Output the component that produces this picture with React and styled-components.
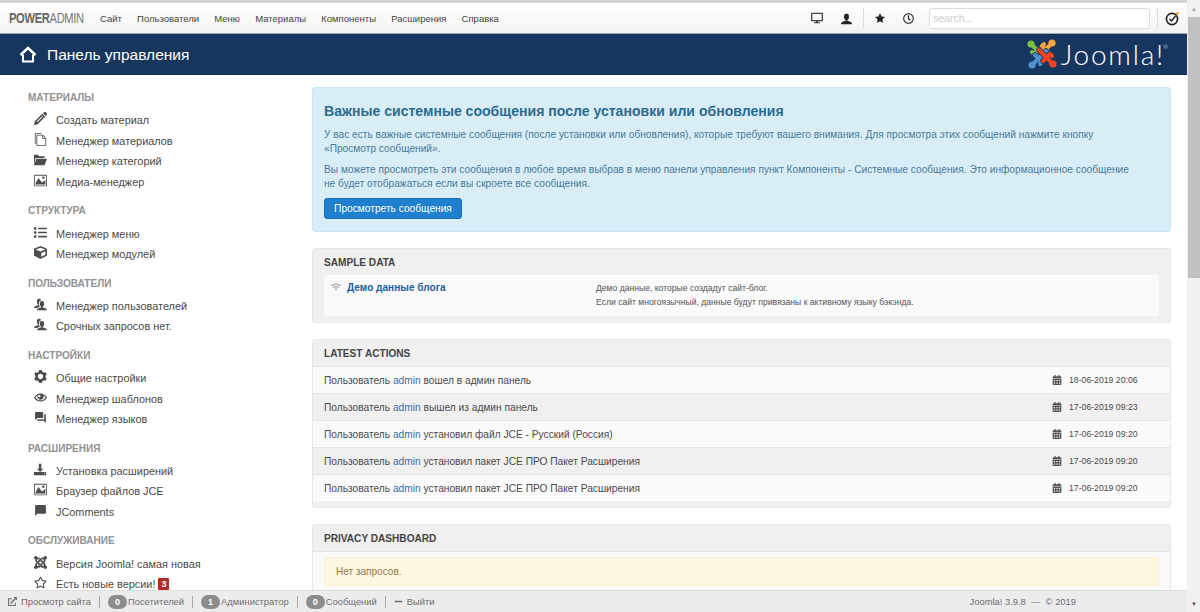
import React from "react";
import styled, { createGlobalStyle } from "styled-components";
import {
  FaCube,
  FaList,
  FaRegStar,
  FaDesktop,
  FaRegClock,
  FaWifi,
  FaCalendarAlt,
  FaExternalLinkAlt,
  FaMinus,
} from "react-icons/fa";
import {
  ImPencil,
  ImFilesEmpty,
  ImFolderOpen,
  ImImage,
  ImUsers,
  ImCog,
  ImEye,
  ImDownload3,
  ImJoomla,
  ImUser,
  ImStarFull,
} from "react-icons/im";
import { MdChatBubble, MdQuestionAnswer } from "react-icons/md";

const MENU = [
  { title: "МАТЕРИАЛЫ", items: [
    { icon: ImPencil, label: "Создать материал" },
    { icon: ImFilesEmpty, label: "Менеджер материалов" },
    { icon: ImFolderOpen, label: "Менеджер категорий" },
    { icon: ImImage, label: "Медиа-менеджер" },
  ] },
  { title: "СТРУКТУРА", items: [
    { icon: FaList, label: "Менеджер меню" },
    { icon: FaCube, label: "Менеджер модулей" },
  ] },
  { title: "ПОЛЬЗОВАТЕЛИ", items: [
    { icon: ImUsers, label: "Менеджер пользователей" },
    { icon: ImUsers, label: "Срочных запросов нет." },
  ] },
  { title: "НАСТРОЙКИ", items: [
    { icon: ImCog, label: "Общие настройки" },
    { icon: ImEye, label: "Менеджер шаблонов" },
    { icon: MdQuestionAnswer, label: "Менеджер языков" },
  ] },
  { title: "РАСШИРЕНИЯ", items: [
    { icon: ImDownload3, label: "Установка расширений" },
    { icon: ImImage, label: "Браузер файлов JCE" },
    { icon: MdChatBubble, label: "JComments" },
  ] },
  { title: "ОБСЛУЖИВАНИЕ", items: [
    { icon: ImJoomla, label: "Версия Joomla! самая новая" },
    { icon: FaRegStar, label: "Есть новые версии!", badge: 3 },
  ] },
];

const NAV = ["Сайт", "Пользователи", "Меню", "Материалы", "Компоненты", "Расширения", "Справка"];

const ACTIONS = [
  { post: " вошел в админ панель", date: "18-06-2019 20:06" },
  { post: " вышел из админ панель", date: "17-06-2019 09:23" },
  { post: " установил файл JCE - Русский (Россия)", date: "17-06-2019 09:20" },
  { post: " установил пакет JCE ПРО Пакет Расширения", date: "17-06-2019 09:20" },
  { post: " установил пакет JCE ПРО Пакет Расширения", date: "17-06-2019 09:20" },
];

const LOGO_ARMS = [
  { color: "#7ac143", angle: 0 },
  { color: "#f9a541", angle: 90 },
  { color: "#5091cd", angle: 270 },
  { color: "#f44321", angle: 180 },
];

const GlobalStyle = createGlobalStyle`
  html, body {
    margin: 0;
    height: 100%;
    overflow: hidden;
    background: #fff;
  }
  body {
    font-family: "Liberation Sans", Arial, sans-serif;
    font-size: 11px;
    color: #515151;
  }
  * { box-sizing: border-box; }
`;

const Page = styled.div`
  width: 1200px;
  height: 612px;
  display: flex;
  overflow: hidden;
`;

const Main = styled.div`
  width: 1187px;
  height: 612px;
  position: relative;
  overflow: hidden;
  border-top: 3px solid #d4d4d4;
`;

const Scrollbar = styled.div`
  width: 13px;
  height: 612px;
  background: #f1f1f1;
  display: flex;
  flex-direction: column;
  align-items: flex-end;
`;

const ScrollArrow = styled.div`
  width: 12px;
  height: 17px;
  display: flex;
  align-items: center;
  justify-content: center;
  color: ${({ $down }) => ($down ? "#505050" : "#a3a3a3")};
  font-size: 6px;
  margin-top: ${({ $down }) => ($down ? "auto" : "0")};
`;

const ScrollThumb = styled.div`
  width: 12px;
  height: 261px;
  background: #c1c1c1;
`;

const NavBar = styled.div`
  height: 31px;
  display: flex;
  align-items: center;
  padding-left: 9px;
  background: linear-gradient(#fff, #f3f3f3);
  border-bottom: 1px solid #9fa8b4;
`;

const Brand = styled.div`
  font-size: 13px;
  color: #777;
  width: 91px;
  flex-shrink: 0;
  letter-spacing: -0.4px;
  transform: scale(0.86, 1.1);
  transform-origin: left center;
  & b { color: #666; }
`;

const NavLink = styled.div`
  font-size: 9.5px;
  color: #444;
  margin-right: 15.2px;
`;

const NavTools = styled.div`
  margin-left: auto;
  display: flex;
  align-items: center;
  color: #222;
`;

const ToolIcon = styled.div`
  width: ${({ $w }) => $w || 28}px;
  display: flex;
  justify-content: center;
  font-size: ${({ $size }) => $size || 12}px;
  color: ${({ $color }) => $color || "#222"};
`;

const ToolDivider = styled.div`
  width: 1px;
  height: 20px;
  background: #ddd;
  margin: 0 ${({ $gap }) => $gap || 8}px;
`;

const Search = styled.input`
  width: 221px;
  height: 21px;
  border: 1px solid #ddd;
  border-radius: 3px;
  background: #fff;
  font: 10.5px "Liberation Sans", Arial, sans-serif;
  padding: 0 3px;
  margin-left: 7px;
  &::placeholder { color: #ccc; }
`;

const Header = styled.div`
  height: 41px;
  background: #17365f;
  border-bottom: 1px solid #0f2a50;
  display: flex;
  align-items: center;
  padding: 0 19px;
  color: #fff;
`;

const HeaderTitle = styled.div`
  font-size: 15.5px;
  margin: 2px 0 0 10px;
`;

const Logo = styled.div`
  margin-left: auto;
  display: flex;
  align-items: center;
  gap: 4px;
`;

const LogoWord = styled.span`
  font-family: Lato, "Open Sans", sans-serif;
  font-weight: 300;
  font-size: 28px;
  letter-spacing: 1.8px;
  color: #fff;
  & sup {
    font-size: 6px;
    letter-spacing: 0;
    vertical-align: 16px;
    line-height: 0;
    margin-left: -2px;
  }
`;

const Body = styled.div`
  display: flex;
  padding: 12px 16px 0 28px;
`;

const Sidebar = styled.div`
  width: 284px;
  flex-shrink: 0;
  padding-top: 1px;
`;

const SideGroup = styled.div`
  margin-bottom: 9.3px;
`;

const SideTitle = styled.div`
  font-size: 10.05px;
  font-weight: bold;
  color: #929292;
  height: 19px;
  line-height: 20px;
  margin-bottom: 3px;
`;

const SideItem = styled.div`
  height: 20.5px;
  display: flex;
  align-items: center;
  font-size: 10.9px;
  color: #4a4a4a;
  padding-left: 6px;
  & svg {
    width: 13px;
    height: 13px;
    margin: -3px 9px 0 0;
    color: #4d4d4d;
    flex-shrink: 0;
  }
`;

const Badge = styled.span`
  background: #b02b2b;
  color: #fff;
  font-size: 9px;
  font-weight: bold;
  padding: 1px 3px;
  margin-left: 3px;
  border-radius: 1px;
`;

const Content = styled.div`
  flex: 1;
  min-width: 0;
  display: flex;
  flex-direction: column;
  gap: 16px;
`;

const Alert = styled.div`
  height: 145px;
  background: #d9edf7;
  border: 1px solid #cde6f3;
  border-radius: 3px;
  padding: 14px 11px;
  color: #4a7a98;
  line-height: 14px;
  font-size: 10.16px;
`;

const AlertTitle = styled.div`
  font-size: 14.07px;
  font-weight: bold;
  color: #2a6b8f;
  line-height: 18px;
  margin-bottom: 8px;
`;

const AlertText = styled.p`
  margin: 0 0 7px;
`;

const Button = styled.button`
  display: block;
  height: 21px;
  width: 138px;
  padding: 0;
  background: #1f80d0;
  border: 1px solid #1a6fb5;
  border-radius: 3px;
  color: #fff;
  font: 10.2px "Liberation Sans", Arial, sans-serif;
`;

const Panel = styled.div`
  background: #f0f0f0;
  border: 1px solid #e8e8e8;
  border-radius: 3px;
  padding-bottom: ${({ $pad }) => $pad || 0}px;
`;

const PanelTitle = styled.div`
  height: 26px;
  line-height: 27px;
  padding-left: 11px;
  font-size: 10.1px;
  font-weight: bold;
  color: #444;
`;

const SampleBox = styled.div`
  margin: 0 11px;
  height: 41px;
  background: #fafafa;
  display: flex;
  padding: 6px 7px;
`;

const SampleName = styled.div`
  width: 265px;
  display: flex;
  gap: 6px;
  font-size: 10.1px;
  line-height: 14px;
  font-weight: bold;
  color: #22609c;
  & svg { color: #aaa; font-size: 10px; margin-top: 1px; }
`;

const SampleDesc = styled.div`
  font-size: 8.6px;
  line-height: 14px;
  color: #555;
`;

const ActionRow = styled.div`
  height: 27px;
  display: flex;
  align-items: center;
  padding: 0 11px;
  font-size: 10.2px;
  color: #4a4a4a;
  background: ${({ $odd }) => ($odd ? "#f0f0f0" : "#fafafa")};
  border-top: 1px solid #e6e6e6;
`;

const UserLink = styled.span`
  color: #3a6ea5;
`;

const ActionDate = styled.div`
  margin-left: auto;
  width: 107px;
  display: flex;
  align-items: center;
  gap: 7px;
  font-size: 8.7px;
  & svg { color: #555; font-size: 10px; flex-shrink: 0; }
`;

const PrivacyBody = styled.div`
  background: #fafafa;
  border-top: 1px solid #e6e6e6;
  padding: 5px 11px;
`;

const Warning = styled.div`
  height: 29px;
  line-height: 27px;
  background: #fdf6e1;
  border: 1px solid #faf0d2;
  border-radius: 3px;
  padding-left: 11px;
  color: #947a44;
  font-size: 10.05px;
`;

const StatusBar = styled.div`
  position: absolute;
  left: 0;
  right: 0;
  bottom: 0;
  height: 22px;
  background: #ececec;
  border-top: 1px solid #ddd;
  display: flex;
  align-items: center;
  padding: 0 0 0 8px;
  font-size: 9.4px;
  color: #6f6f6f;
`;

const StatusItem = styled.div`
  display: flex;
  align-items: center;
  gap: ${({ $gap }) => $gap || 1}px;
  & svg { font-size: 9px; }
`;

const StatusDivider = styled.div`
  width: 1px;
  height: 12px;
  background: #aaa;
  margin: 0 8px;
`;

const Count = styled.span`
  background: #8c8c8c;
  color: #fff;
  font-size: 9px;
  font-weight: bold;
  width: 19px;
  height: 14px;
  border-radius: 7px;
  text-align: center;
  line-height: 14px;
`;

const Copyright = styled.div`
  margin-left: auto;
  margin-right: 111px;
  white-space: pre;
`;

function JoomlaMark() {
  // one arm of the logo, rotated round the centre for the other three
  return (
    <svg width="30" height="30" viewBox="0 0 30 30" fill="none" strokeLinecap="round">
      {LOGO_ARMS.map(arm => (
        <g key={arm.color} transform={`rotate(${arm.angle} 15 15)`}>
          <path d="M5 6 L18 19 M7 15 L14 8" stroke="#17365f" strokeWidth="5.5" />
          <path d="M5 6 L18 19 M7 15 L14 8 M7 15 L5 13" stroke={arm.color} strokeWidth="4" />
          <circle cx="4" cy="5" r="3.6" fill={arm.color} />
        </g>
      ))}
    </svg>
  );
}

function HomeIcon() {
  return (
    <svg width="18" height="17" viewBox="0 0 18 17" fill="none" stroke="#fff">
      <path d="M1.5 9 L9 2 L16.5 9" strokeWidth="2.4" />
      <path d="M4 8.5 V15.5 H14 V8.5" strokeWidth="2" />
    </svg>
  );
}

function UpdateIcon() {
  return (
    <svg width="15" height="15" viewBox="0 0 15 15" fill="none">
      <circle cx="7" cy="8" r="5.6" stroke="#222" strokeWidth="1.6" />
      <path d="M4.5 8 L6.5 10 L10.5 5" stroke="#222" strokeWidth="1.5" />
      <circle cx="12.5" cy="2.5" r="1.4" fill="#f0a030" />
    </svg>
  );
}

export default function App() {
  return (
    <Page>
      <GlobalStyle />
      <Main>
        <NavBar>
          <Brand><b>POWER</b>ADMIN</Brand>
          {NAV.map(item => (
            <NavLink key={item}>{item}</NavLink>
          ))}
          <NavTools>
            <ToolIcon $color="#444"><FaDesktop /></ToolIcon>
            <ToolIcon $w={30} $size={13}><ImUser /></ToolIcon>
            <ToolDivider $gap={2} />
            <ToolIcon><ImStarFull size={10} /></ToolIcon>
            <ToolIcon><FaRegClock size={11} /></ToolIcon>
            <Search placeholder="search..." />
            <ToolDivider $gap={7} />
            <ToolIcon $w={15}><UpdateIcon /></ToolIcon>
            <ToolIcon $w={7} />
          </NavTools>
        </NavBar>
        <Header>
          <HomeIcon />
          <HeaderTitle>Панель управления</HeaderTitle>
          <Logo>
            <JoomlaMark />
            <LogoWord>Joomla!<sup>®</sup></LogoWord>
          </Logo>
        </Header>
        <Body>
          <Sidebar>
            {MENU.map(group => (
              <SideGroup key={group.title}>
                <SideTitle>{group.title}</SideTitle>
                {group.items.map(item => (
                  <SideItem key={item.label}>
                    <item.icon />
                    {item.label}
                    {item.badge && <Badge>{item.badge}</Badge>}
                  </SideItem>
                ))}
              </SideGroup>
            ))}
          </Sidebar>
          <Content>
            <Alert>
              <AlertTitle>Важные системные сообщения после установки или обновления</AlertTitle>
              <AlertText>
                У вас есть важные системные сообщения (после установки или обновления), которые требуют вашего внимания. Для просмотра этих сообщений нажмите кнопку<br />
                «Просмотр сообщений».
              </AlertText>
              <AlertText>
                Вы можете просмотреть эти сообщения в любое время выбрав в меню панели управления пункт Компоненты - Системные сообщения. Это информационное сообщение<br />
                не будет отображаться если вы скроете все сообщения.
              </AlertText>
              <Button>Просмотреть сообщения</Button>
            </Alert>
            <Panel $pad={6}>
              <PanelTitle>SAMPLE DATA</PanelTitle>
              <SampleBox>
                <SampleName><FaWifi />Демо данные блога</SampleName>
                <SampleDesc>
                  Демо данные, которые создадут сайт-блог.<br />
                  Если сайт многоязычный, данные будут привязаны к активному языку бэкэнда.
                </SampleDesc>
              </SampleBox>
            </Panel>
            <Panel $pad={6}>
              <PanelTitle>LATEST ACTIONS</PanelTitle>
              {ACTIONS.map((a, i) => (
                <ActionRow key={i} $odd={i % 2 === 1}>
                  <span>Пользователь <UserLink>admin</UserLink>{a.post}</span>
                  <ActionDate><FaCalendarAlt />{a.date}</ActionDate>
                </ActionRow>
              ))}
            </Panel>
            <Panel>
              <PanelTitle>PRIVACY DASHBOARD</PanelTitle>
              <PrivacyBody>
                <Warning>Нет запросов.</Warning>
              </PrivacyBody>
            </Panel>
          </Content>
        </Body>
        <StatusBar>
          <StatusItem $gap={4}><FaExternalLinkAlt />Просмотр сайта</StatusItem>
          <StatusDivider />
          <StatusItem><Count>0</Count>Посетителей</StatusItem>
          <StatusDivider />
          <StatusItem><Count>1</Count>Администратор</StatusItem>
          <StatusDivider />
          <StatusItem><Count>0</Count>Сообщений</StatusItem>
          <StatusDivider />
          <StatusItem $gap={4}><FaMinus />Выйти</StatusItem>
          <Copyright>Joomla! 3.9.8  —  © 2019</Copyright>
        </StatusBar>
      </Main>
      <Scrollbar>
        <ScrollArrow>▲</ScrollArrow>
        <ScrollThumb />
        <ScrollArrow $down>▼</ScrollArrow>
      </Scrollbar>
    </Page>
  );
}
